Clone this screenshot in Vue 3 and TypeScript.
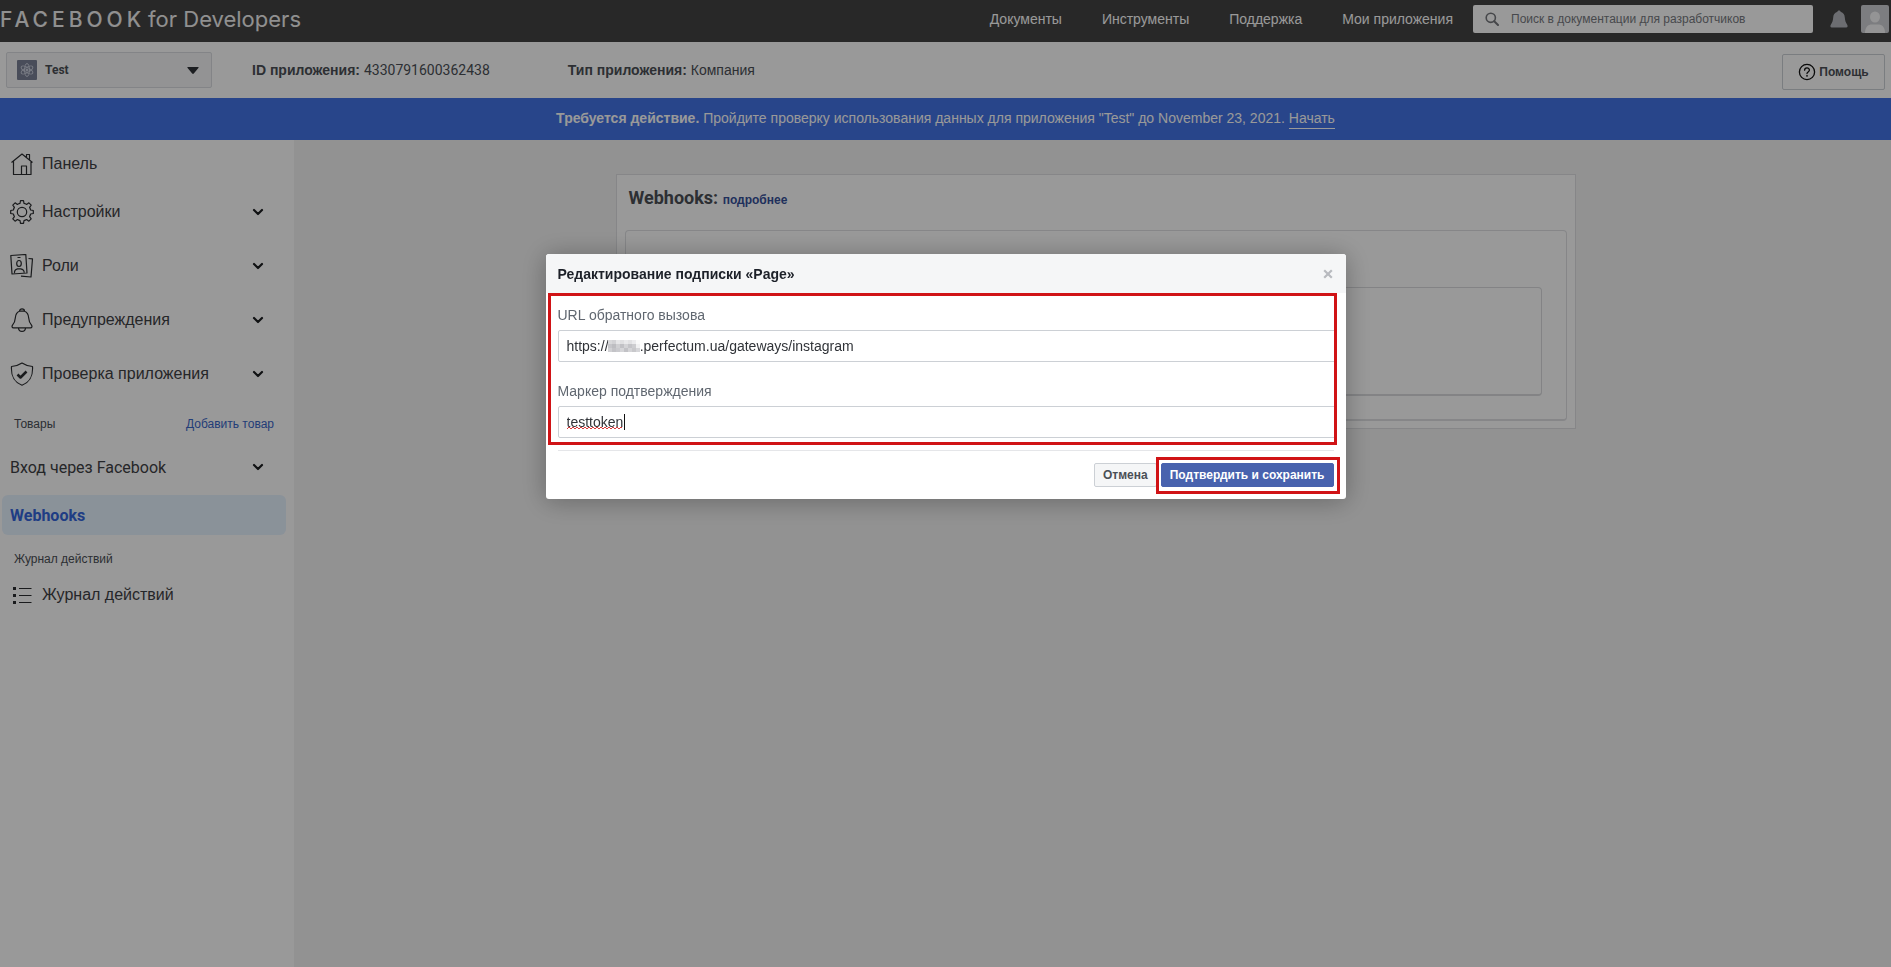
<script setup lang="ts">
import { ref } from 'vue'

interface NavItem {
  label: string
  icon: 'home' | 'gear' | 'roles' | 'bell' | 'shield'
  expandable: boolean
}

const topLinks: string[] = ['Документы', 'Инструменты', 'Поддержка', 'Мои приложения']

const navItems: NavItem[] = [
  { label: 'Панель', icon: 'home', expandable: false },
  { label: 'Настройки', icon: 'gear', expandable: true },
  { label: 'Роли', icon: 'roles', expandable: true },
  { label: 'Предупреждения', icon: 'bell', expandable: true },
  { label: 'Проверка приложения', icon: 'shield', expandable: true },
]

const search = ref('')
const callbackUrl = ref('https://' + '\u00a0'.repeat(8) + '.perfectum.ua/gateways/instagram')
const verifyToken = ref('testtoken')

/* Shades of the mosaic that hides the subdomain, row by row. */
const mosaic: string[][] = [
  ['#d9d9db', '#d2d2d5', '#e6e6e8', '#e0e0e2', '#e9e9eb', '#e2e2e4', '#ececee', '#fafafa'],
  ['#c6c6ca', '#bdbdc1', '#cfcfd2', '#c1c1c5', '#d3d3d6', '#c4c4c8', '#cdcdd0', '#f1f1f2'],
  ['#d1d1d4', '#c3c3c7', '#cacace', '#d5d5d8', '#c2c2c6', '#d4d4d7', '#c8c8cb', '#d6d6d9'],
]
</script>

<template>
  <div class="page">
    <header class="topbar">
      <a class="logo" href="#"><span class="brand">FACEBOOK</span><span>for Developers</span></a>
      <nav class="top-nav">
        <a v-for="link in topLinks" :key="link" href="#">{{ link }}</a>
      </nav>
      <label class="search">
        <svg viewBox="0 0 14 14" width="14" height="14" aria-hidden="true">
          <circle cx="5.8" cy="5.8" r="4.6" fill="none" stroke="#75777c" stroke-width="1.6" />
          <path d="M9.2 9.2L13 13" stroke="#75777c" stroke-width="2" stroke-linecap="round" />
        </svg>
        <input v-model="search" type="search" aria-label="Поиск" placeholder="Поиск в документации для разработчиков" />
      </label>
      <button class="icon-btn bell" type="button" aria-label="Уведомления">
        <svg viewBox="0 0 18 18" width="18" height="18">
          <path d="M9 0.500c.9 0 1.500.6 1.600 1.300 3 .9 4 3 4.200 5.700.2 3 .9 5 2.400 7.200.8 1.300.4 2.800-1 2.800H1.800c-1.400 0-1.800-1.500-1-2.800C2.300 12.500 3 10.500 3.200 7.500 3.400 4.800 4.400 2.700 7.400 1.800 7.500 1.100 8.100.5 9 .5z" fill="#b4b6bd" />
        </svg>
      </button>
      <button class="icon-btn avatar" type="button" aria-label="Профиль">
        <svg viewBox="0 0 28 28" width="28" height="28">
          <rect width="28" height="28" rx="2" fill="#cfd0d5" />
          <ellipse cx="14" cy="12" rx="5" ry="5.500" fill="#f7f7f8" />
          <path d="M4 28c0-6 3-8.500 7-8.500h6c4 0 7 2.500 7 8.500z" fill="#f7f7f8" />
        </svg>
      </button>
    </header>

    <section class="appbar">
      <button class="app-select" type="button">
        <svg class="app-icon" viewBox="0 0 20 20" width="20" height="20" aria-hidden="true">
          <rect width="20" height="20" rx="1" fill="#7b8196" />
          <g fill="none" stroke="#c8cddb" stroke-width="1">
            <ellipse cx="10" cy="10" rx="2.500" ry="6.500" />
            <ellipse cx="10" cy="10" rx="2.500" ry="6.500" transform="rotate(60 10 10)" />
            <ellipse cx="10" cy="10" rx="2.500" ry="6.500" transform="rotate(120 10 10)" />
          </g>
          <circle cx="10" cy="10" r="1.500" fill="#c8cddb" />
        </svg>
        <span>Test</span>
        <svg class="caret" viewBox="0 0 12 7" width="12" height="7" aria-hidden="true">
          <path d="M1 0h10c.6 0 .8.6.4 1L6.800 6.500c-.5.5-1.100.5-1.600 0L.6 1C.2.6.4 0 1 0z" fill="#303338" />
        </svg>
      </button>
      <p class="meta"><b>ID приложения:</b> <span class="latin">4330791600362438</span></p>
      <p class="meta"><b>Тип приложения:</b> Компания</p>
      <button class="help" type="button">
        <svg viewBox="0 0 18 18" width="18" height="18" aria-hidden="true">
          <g fill="none" stroke="#111" stroke-width="1.300" stroke-linecap="round">
            <circle cx="9" cy="9" r="7.600" />
            <path d="M6.600 7.200c0-3 4.800-3 4.800-.2C11.400 9 9 8.800 9 10.600" />
          </g>
          <circle cx="9" cy="12.800" r=".9" fill="#111" />
        </svg>
        <span>Помощь</span>
      </button>
    </section>

    <section class="banner">
      <p><b>Требуется действие.</b> Пройдите проверку использования данных для приложения "Test" до November 23, 2021. <a href="#">Начать</a></p>
    </section>

    <div class="body">
      <aside class="sidebar">
        <a v-for="item in navItems" :key="item.label" class="nav-item" :class="{ expandable: item.expandable }" href="#">
          <svg class="nav-icon" viewBox="0 0 24 24" width="24" height="24" aria-hidden="true">
            <g v-if="item.icon === 'home'">
              <path d="M1.500 10.500L12 2l10.500 8.500M3.500 9v13.500h17.500V9M11.500 22.500v-8.500h5v8.500M16.500 5.500V2.500h3V8" />
            </g>
            <g v-else-if="item.icon === 'gear'">
              <path d="M10.500 .7h3l.5 2.700q1.400.3 2.600 1l2.300-1.600 2.300 2.300-1.600 2.300q.7 1.200 1 2.600l2.700.5v3l-2.700.5q-.3 1.400-1 2.600l1.600 2.300-2.300 2.300-2.300-1.600q-1.200.7-2.600 1l-.5 2.700h-3l-.5-2.700q-1.400-.3-2.600-1l-2.300 1.600-2.300-2.300 1.600-2.300q-.7-1.200-1-2.600L.7 13.500v-3l2.700-.5q.3-1.400 1-2.600L2.800 5.100l2.300-2.300 2.300 1.600q1.200-.7 2.600-1z" />
              <circle cx="12" cy="12" r="4.700" />
            </g>
            <g v-else-if="item.icon === 'roles'">
              <path d="M.8 1.500l15-1 1.200 18.500-15 1z" />
              <path d="M18.500 4.500l4 .3-1.500 18.200-10-.8" />
              <ellipse cx="9" cy="9.500" rx="2.300" ry="3" />
              <path d="M4.500 19.300c-.3-2.600 1-4 3-4.500h3.200c2 .3 3.500 1.800 3.500 4M7.500 3.500h3" />
            </g>
            <g v-else-if="item.icon === 'bell'">
              <path d="M9.500 3.200c0-3 5-3 5 0M9.500 3.200C6.500 4.200 5.500 7 5.300 10c-.2 3.500-1 5-2.800 7.200-1 1.300-.4 2.600 1 2.600h17c1.400 0 2-1.300 1-2.600-1.800-2.200-2.600-3.700-2.800-7.200-.2-3-1.200-5.800-4.200-6.800z" />
              <path d="M8.500 20c.3 4.500 6.700 4.500 7 0" />
            </g>
            <g v-else>
              <path d="M12 1c3 2 6.500 3.200 10.500 3.500.5 8-1 15-10.500 18.700C2.500 19.500 1 12.500 1.500 4.500 5.500 4.200 9 3 12 1z" />
              <path class="tick" d="M7.500 12.500l3 3 6-6" />
            </g>
          </svg>
          <span>{{ item.label }}</span>
          <svg v-if="item.expandable" class="chevron" viewBox="0 0 12 8" width="12" height="8" aria-hidden="true">
            <path d="M2 2l4 4 4-4" />
          </svg>
        </a>

        <div class="group-head">
          <span>Товары</span>
          <a href="#">Добавить товар</a>
        </div>
        <a class="nav-item product" href="#">
          <span>Вход через Facebook</span>
          <svg class="chevron" viewBox="0 0 12 8" width="12" height="8" aria-hidden="true">
            <path d="M2 2l4 4 4-4" />
          </svg>
        </a>
        <a class="nav-item product active" href="#">Webhooks</a>

        <div class="group-head log-head"><span>Журнал действий</span></div>
        <a class="nav-item log" href="#">
          <svg class="nav-icon" viewBox="0 0 24 24" width="24" height="24" aria-hidden="true">
            <path d="M9 5.500h12.500M9 12.500h12.500M9 19.500h12.500" />
            <path d="M3 4h3v3H3zM3 11h3v3H3zM3 18h3v3H3z" class="dots" />
          </svg>
          <span>Журнал действий</span>
        </a>
      </aside>

      <main class="content">
        <section class="card">
          <h1>Webhooks: <a href="#">подробнее</a></h1>
          <div class="panel">
            <div class="panel-inner"></div>
          </div>
        </section>
      </main>
    </div>

    <div class="overlay">
      <form class="modal" role="dialog" aria-labelledby="dialog-title" @submit.prevent>
        <header class="modal-head">
          <h2 id="dialog-title">Редактирование подписки «Page»</h2>
          <button class="close" type="button" aria-label="Закрыть">
            <svg viewBox="0 0 10 10" width="10" height="10">
              <path d="M1.200 1.200l7.600 7.600M8.800 1.200L1.200 8.800" stroke="#b8babf" stroke-width="2.200" />
            </svg>
          </button>
        </header>
        <div class="fields">
          <label for="callback">URL обратного вызова</label>
          <div class="field">
            <input id="callback" v-model="callbackUrl" type="text" />
            <svg class="mosaic" viewBox="0 0 32 12" width="32" height="12" aria-hidden="true">
              <g v-for="(row, r) in mosaic" :key="r">
                <rect v-for="(shade, c) in row" :key="c" :x="c * 4" :y="r * 4" width="4" height="4" :fill="shade" />
              </g>
            </svg>
          </div>
          <label for="token">Маркер подтверждения</label>
          <div class="field">
            <input id="token" v-model="verifyToken" type="text" spellcheck="false" />
            <svg class="spelling" viewBox="0 0 58 18" width="58" height="18" aria-hidden="true">
              <path d="M0 16l2-2 2 2 2-2 2 2 2-2 2 2 2-2 2 2 2-2 2 2 2-2 2 2 2-2 2 2 2-2 2 2 2-2 2 2 2-2 2 2 2-2 2 2 2-2 2 2 2-2 2 2 2-2 1 1" fill="none" stroke="#d93a3a" />
              <path d="M57.500 1v16" stroke="#111" />
            </svg>
          </div>
        </div>
        <footer class="modal-foot">
          <button class="btn cancel" type="button">Отмена</button>
          <div class="marked">
            <button class="btn confirm" type="submit">Подтвердить и сохранить</button>
          </div>
        </footer>
      </form>
    </div>
  </div>
</template>

<style>
body {
  margin: 0;
  background: #f3f3f3;
}
</style>

<style scoped>
* {
  box-sizing: border-box;
}

.page {
  display: flex;
  flex-direction: column;
  min-height: 100vh;
  font-family: 'Liberation Sans', Arial, sans-serif;
  font-size: 14px;
  color: #4b4f56;
}

a {
  color: inherit;
  text-decoration: none;
}

button {
  font-family: inherit;
  cursor: pointer;
}

p,
h1,
h2 {
  margin: 0;
}

.latin {
  font-family: Roboto, sans-serif;
}

.topbar {
  display: flex;
  align-items: center;
  height: 42px;
  padding: 0 2px 4px 0;
  background: #434343;
  color: #fff;
}

.logo {
  display: flex;
  align-items: baseline;
  gap: 3px;
  font-family: Inter, sans-serif;
  font-size: 22px;
  line-height: 28px;
  color: #f0f0f0;
}

.brand {
  font-size: 21px;
  font-weight: 500;
  letter-spacing: 4px;
}

.top-nav {
  display: flex;
  gap: 40px;
  margin-left: auto;
  margin-right: 20px;
}

.search {
  display: flex;
  align-items: center;
  gap: 12px;
  width: 340px;
  height: 28px;
  padding: 0 12px;
  border-radius: 2px;
  background: #fff;
}

.search input {
  flex: 1;
  min-width: 0;
  padding: 0;
  border: 0;
  outline: 0;
  background: transparent;
  font-family: inherit;
  font-size: 12px;
}

.search input::placeholder {
  color: #777a80;
}

.icon-btn {
  display: flex;
  padding: 0;
  border: 0;
  background: none;
}

.bell {
  margin: 0 13px 0 17px;
}

.appbar {
  display: flex;
  align-items: center;
  height: 56px;
  padding: 0 6px;
  background: #fff;
}

.app-select {
  display: flex;
  align-items: center;
  gap: 8px;
  width: 206px;
  height: 36px;
  margin-right: 40px;
  padding: 0 12px 0 10px;
  border: 1px solid #dadde1;
  border-radius: 2px;
  background: #f5f6f7;
  font-family: Roboto, sans-serif;
  font-size: 12px;
  font-weight: 700;
  color: #4b4f56;
}

.caret {
  margin-left: auto;
}

.meta {
  margin-right: 78px;
}

.help {
  display: flex;
  align-items: center;
  justify-content: center;
  gap: 3px;
  width: 103px;
  height: 36px;
  margin: 4px 0 0 auto;
  padding: 0;
  border: 1px solid #ccd0d5;
  border-radius: 2px;
  background: #fff;
  font-size: 12px;
  font-weight: 700;
  color: #4b4f56;
}

.banner {
  display: flex;
  align-items: center;
  justify-content: center;
  height: 42px;
  padding-bottom: 2px;
  background: #4373e6;
  color: #fff;
}

.banner a {
  padding-bottom: 2px;
  border-bottom: 1px solid #fff;
}

.body {
  display: flex;
  flex: 1;
}

.sidebar {
  flex: none;
  width: 294px;
  padding: 7px 8px 0 2px;
  background: #fff;
}

.nav-item {
  display: flex;
  align-items: center;
  gap: 8px;
  height: 34px;
  padding: 0 22px 0 8px;
  border-radius: 6px;
  font-size: 16px;
  color: #3f4145;
}

.expandable {
  height: 40px;
  margin-top: 14px;
}

.nav-item:first-child + .expandable {
  margin-top: 11px;
}

.nav-icon {
  flex: none;
  fill: none;
  stroke: #2c2e31;
  stroke-width: 1.200;
  stroke-linejoin: round;
}

.tick {
  stroke-width: 2.500;
}

.dots {
  fill: #2c2e31;
  stroke: none;
}

.chevron {
  margin-left: auto;
  fill: none;
  stroke: #1c1e21;
  stroke-width: 2.200;
  stroke-linecap: round;
  stroke-linejoin: round;
}

.group-head {
  display: flex;
  justify-content: space-between;
  margin-top: 22px;
  padding: 0 12px;
  font-size: 12px;
  line-height: 16px;
}

.group-head a {
  color: #3a66c8;
}

.product {
  height: 40px;
  margin-top: 15px;
  font-family: Roboto, 'Liberation Sans', sans-serif;
}

.product.active {
  margin-top: 8px;
  background: #e7f3ff;
  font-weight: 700;
  color: #3566dc;
}

.log-head {
  margin-top: 16px;
}

.log {
  margin-top: 11px;
}

.content {
  flex: 1;
  padding: 34px 0 0 6px;
}

.card {
  width: 960px;
  margin: 0 auto;
  padding: 11px 8px 7px;
  border: 1px solid #dfe0e3;
  background: #fff;
}

.card h1 {
  padding-left: 4px;
  font-family: Roboto, sans-serif;
  font-size: 18px;
  line-height: 24px;
  font-weight: 700;
}

.card h1 a {
  font-family: 'Liberation Sans', Arial, sans-serif;
  font-size: 12px;
  color: #365099;
}

.panel {
  height: 191px;
  margin-top: 18px;
  padding: 56px 24px 24px;
  border: 1px solid #dfe0e3;
  border-bottom-width: 2px;
  border-radius: 4px;
}

.panel-inner {
  height: 109px;
  border: 1px solid #dadbde;
  border-bottom-width: 2px;
  border-radius: 4px;
}

.overlay {
  position: fixed;
  inset: 0;
  display: flex;
  align-items: flex-start;
  justify-content: center;
  padding-top: 254px;
  background: rgba(0, 0, 0, 0.4);
}

.modal {
  width: 800px;
  border-radius: 3px;
  background: #fff;
  box-shadow: 0 2px 26px rgba(0, 0, 0, 0.3);
}

.modal-head {
  display: flex;
  align-items: center;
  justify-content: space-between;
  height: 39px;
  padding: 0 13px 0 12px;
  border-radius: 3px 3px 0 0;
  background: #f5f6f7;
}

.modal-head h2 {
  font-size: 14px;
  font-weight: 700;
  color: #1d2129;
}

.close {
  display: flex;
  padding: 0;
  border: 0;
  background: none;
}

.fields {
  margin: 0 9px 0 2px;
  height: 152px;
  padding: 10px 0 0 7px;
  border: 3px solid #d01316;
  overflow: hidden;
}

.fields label {
  display: block;
  line-height: 18px;
  color: #606770;
}

.field {
  position: relative;
  margin: 6px -3px 20px 0;
}

.field input {
  display: block;
  width: 100%;
  height: 32px;
  padding: 0 8px;
  border: 1px solid #ccd0d5;
  border-radius: 2px;
  outline: 0;
  font-family: inherit;
  font-size: 14px;
  color: #303338;
}

.mosaic {
  position: absolute;
  left: 50px;
  top: 10px;
}

.spelling {
  position: absolute;
  left: 9px;
  top: 7px;
}

.modal-foot {
  display: flex;
  align-items: center;
  justify-content: flex-end;
  margin: 5px 12px 0;
  height: 49px;
  border-top: 1px solid #e5e6e9;
}

.btn {
  height: 24px;
  padding: 0 8px;
  border: 1px solid #ccd0d5;
  border-radius: 2px;
  background: #f5f6f7;
  font-size: 12px;
  font-weight: 700;
  color: #4b4f56;
}

.marked {
  margin: 0 -6px 0 -1px;
  padding: 3px 3px 4px 2px;
  border: 3px solid #d01316;
  background: #fff;
}

.confirm {
  display: block;
  border-color: #4862ae;
  background: #4862ae;
  color: #fff;
}
</style>
